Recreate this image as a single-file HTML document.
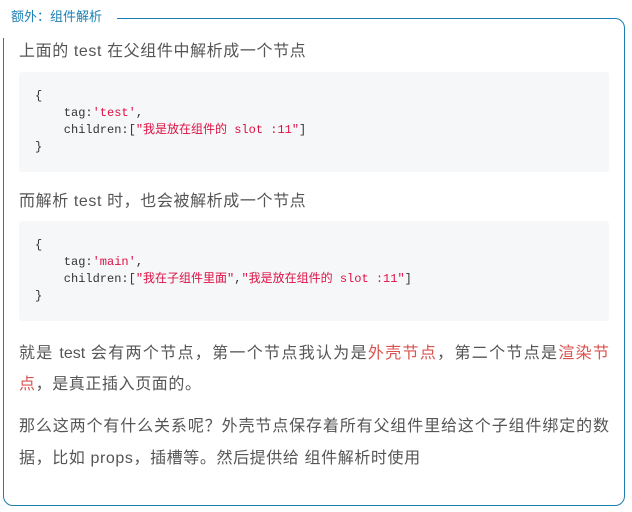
<!DOCTYPE html>
<html><head><meta charset="utf-8"><style>
body{margin:0;width:632px;height:512px;background:#fff;position:relative;overflow:hidden;font-family:"Liberation Sans","Noto Sans CJK SC",sans-serif;}
.box{position:absolute;left:3px;top:18px;width:620px;height:486px;border:1px solid #1b7db0;border-radius:0 10px 10px 10px;}
.mask{position:absolute;left:0;top:8px;width:117px;height:30px;background:#fff;}
.legend{position:absolute;left:11px;top:8px;font-size:13px;color:#1a80b6;line-height:18px;}
p{position:absolute;left:19px;margin:0;font-size:16px;color:#555;width:590px;white-space:nowrap;letter-spacing:0.6px;}
.j{text-align:justify;text-align-last:justify;letter-spacing:0;}
.code{position:absolute;left:19px;width:590px;height:100px;background:#f6f7f9;border-radius:3px;font-family:"Liberation Mono","Noto Sans CJK SC",monospace;font-size:12px;color:#333;line-height:17px;}
.code div{position:absolute;left:16px;top:16px;white-space:pre;}
.s{color:#dd1144}
.r{color:#d9534f}
</style></head><body>
<div class="box"></div>
<div class="mask"></div>
<div class="legend">额外：组件解析</div>
<p style="top:42px;line-height:20px">上面的 test 在父组件中解析成一个节点</p>
<div class="code" style="top:72px"><div>{
    tag:<span class="s">'test'</span>,
    children:[<span class="s">"我是放在组件的 slot :11"</span>]
}</div></div>
<p style="top:192px;line-height:20px">而解析 test 时，也会被解析成一个节点</p>
<div class="code" style="top:221px"><div>{
    tag:<span class="s">'main'</span>,
    children:[<span class="s">"我在子组件里面"</span>,<span class="s">"我是放在组件的 slot :11"</span>]
}</div></div>
<p class="j" style="top:344px;line-height:20px">就是 test 会有两个节点，第一个节点我认为是<span class="r">外壳节点</span>，第二个节点是<span class="r">渲染节</span></p>
<p style="top:375px;line-height:20px"><span class="r">点</span>，是真正插入页面的。</p>
<p class="j" style="top:417px;line-height:20px">那么这两个有什么关系呢？外壳节点保存着所有父组件里给这个子组件绑定的数</p>
<p style="top:449px;line-height:20px">据，比如 props，插槽等。然后提供给 组件解析时使用</p>
</body></html>
